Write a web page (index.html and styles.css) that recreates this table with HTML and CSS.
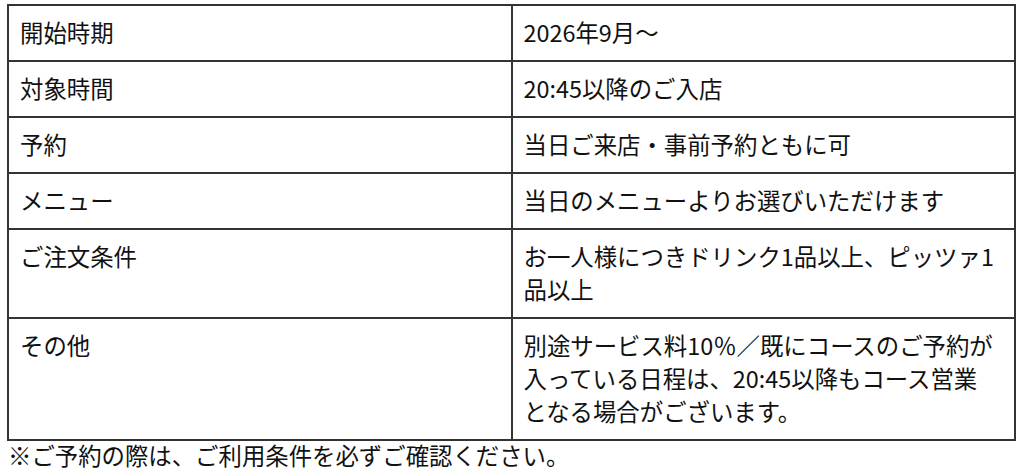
FILE: index.html
```html
<!DOCTYPE html>
<html lang="ja">
<head>
<meta charset="utf-8">
<link rel="stylesheet" href="styles.css">
</head>
<body>
<div class="page">
  <table class="info">
    <tr><th>開始時期</th><td>2026年9月～</td></tr>
    <tr><th>対象時間</th><td>20:45以降のご入店</td></tr>
    <tr><th>予約</th><td>当日ご来店・事前予約ともに可</td></tr>
    <tr><th>メニュー</th><td>当日のメニューよりお選びいただけます</td></tr>
    <tr><th>ご注文条件</th><td>お一人様につきドリンク1品以上、ピッツァ1品以上</td></tr>
    <tr><th>その他</th><td>別途サービス料10％／既にコースのご予約が入っている日程は、20:45以降もコース営業<br>となる場合がございます。</td></tr>
  </table>
  <p class="note">※ご予約の際は、ご利用条件を必ずご確認ください。</p>
</div>
</body>
</html>
```
FILE: styles.css
```css
html, body {
  margin: 0;
  padding: 0;
  background: #ffffff;
}
body {
  font-family: "Noto Sans CJK JP", "Noto Sans", sans-serif;
  color: #111111;
  font-size: 23.4px;
}
.page {
  padding: 4px 8px 0 7px;
}
.info {
  width: 1009px;
  border-collapse: collapse;
  table-layout: fixed;
}
.info th,
.info td {
  width: 50%;
  border: 2px solid #333333;
  padding: 10px 10px 11px 11px;
  text-align: left;
  vertical-align: top;
  font-weight: normal;
  line-height: 33px;
}
.note {
  margin: 0;
  padding-left: 1px;
  line-height: 28px;
}
```
